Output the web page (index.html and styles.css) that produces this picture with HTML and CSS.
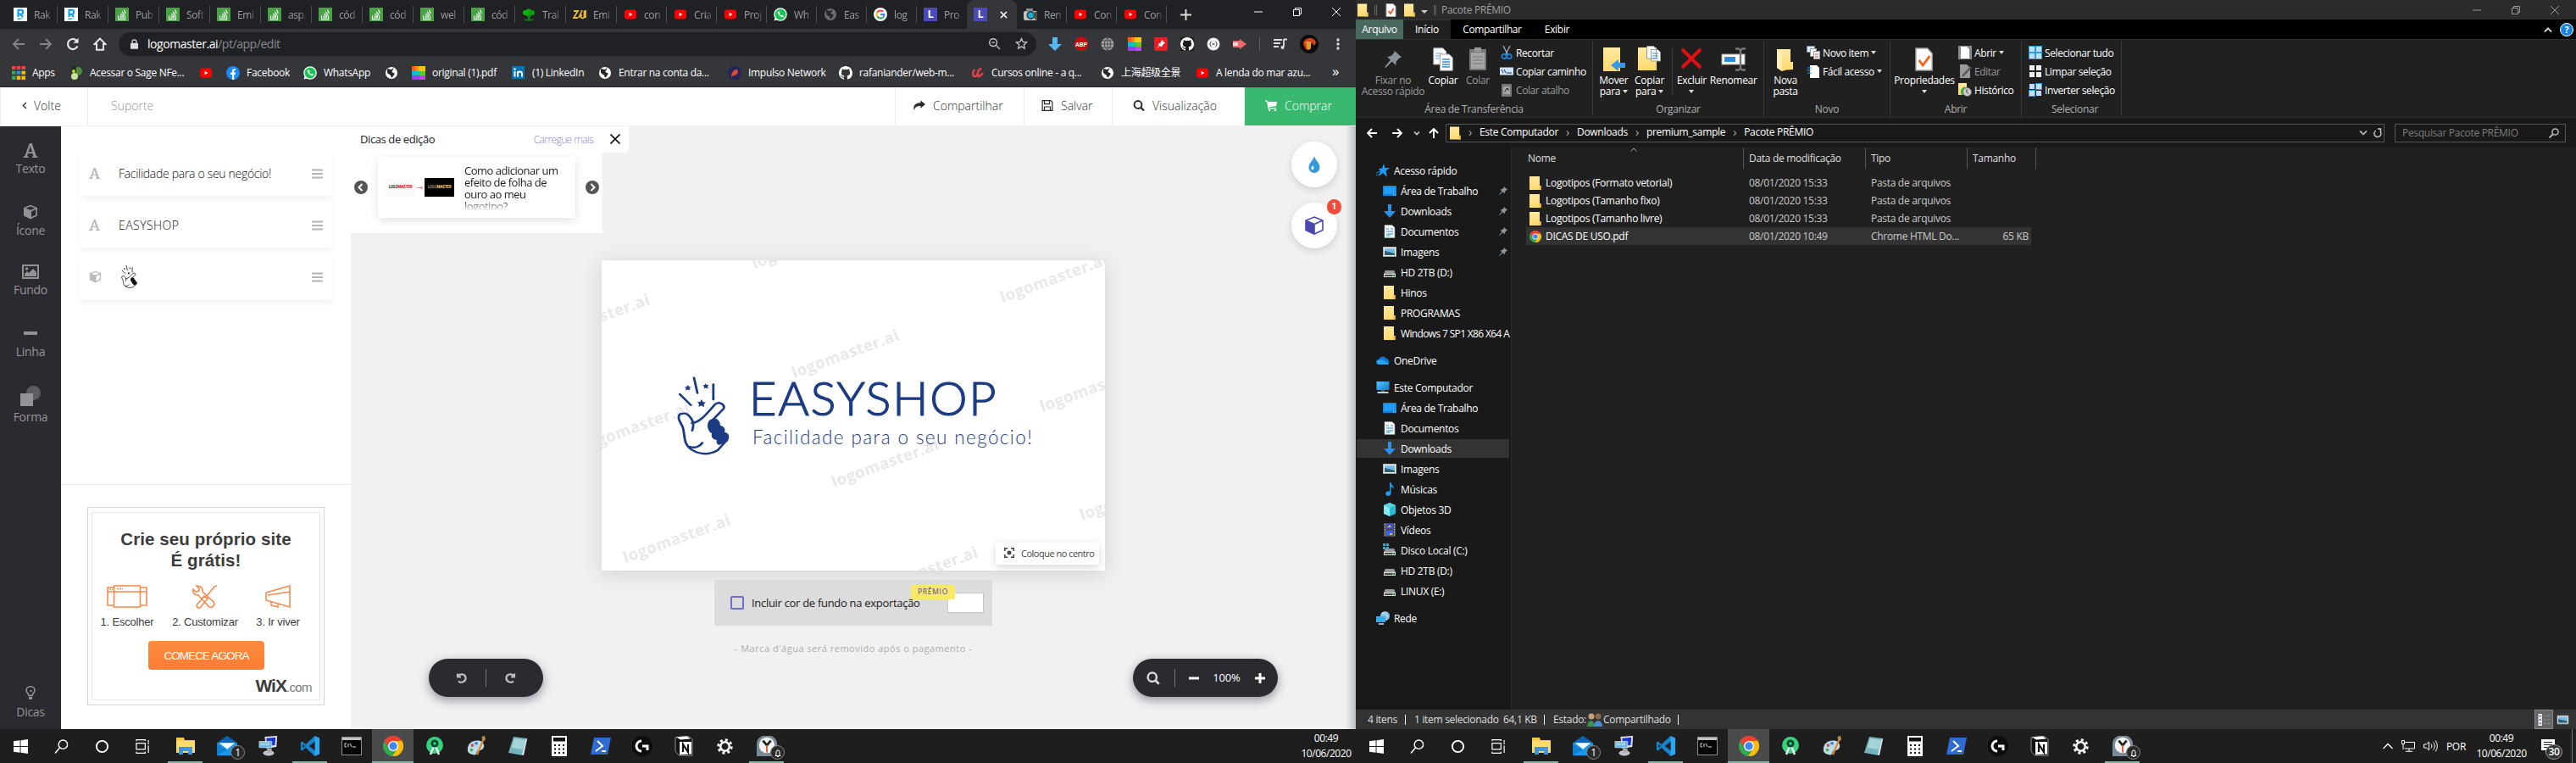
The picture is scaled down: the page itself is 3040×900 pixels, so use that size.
FILE: index.html
```html
<!DOCTYPE html>
<html lang="pt">
<head>
<meta charset="utf-8">
<title>Logomaster</title>
<link rel="stylesheet" href="styles.css">
</head>
<body>
<svg class="defs" width="0" height="0">
  <defs>
    <linearGradient id="gfold" x1="0" y1="0" x2="0" y2="1"><stop offset="0" stop-color="#ffe9a2"/><stop offset="1" stop-color="#ffd96b"/></linearGradient>
    <linearGradient id="gblue" x1="0" y1="0" x2="1" y2="1"><stop offset="0" stop-color="#5cc4ff"/><stop offset="1" stop-color="#0a7bd6"/></linearGradient>
    <symbol id="so" viewBox="0 0 16 16"><rect width="16" height="16" fill="#4ba246"/><path d="M3.500 9.500v4.500h8V9.500M5 12h5M5.300 9.800l4.800.9M6.200 7.300l4.200 2.200M8 4.800l3.200 3.500M10.500 2.500l1.800 4.300" fill="none" stroke="#fff" stroke-width="1.100"/></symbol>
    <symbol id="rk" viewBox="0 0 16 16"><rect width="16" height="16" fill="#fff"/><path d="M5.500 11V2.800h3.200a2.400 2.400 0 0 1 0 4.900H5.500M8 7.700l3 3.300" fill="none" stroke="#0a9bf0" stroke-width="2"/><path d="M4 12.500h8l-6.500 1.800z" fill="#0a9bf0"/></symbol>
    <symbol id="yt" viewBox="0 0 16 16"><rect x="1" y="2.500" width="14" height="11" rx="3" fill="#f00"/><path d="M6.600 5.800v4.400L10.400 8z" fill="#fff"/></symbol>
    <symbol id="tree" viewBox="0 0 16 16"><circle cx="8" cy="6" r="4.500" fill="#0ea80e"/><circle cx="4" cy="6" r="3" fill="#0db40d"/><circle cx="12" cy="6" r="3" fill="#0a9a0a"/><rect x="7" y="8" width="2.500" height="6" fill="#0a8a1a"/><ellipse cx="8" cy="14.500" rx="6" ry="1.200" fill="#0d7a1d"/></symbol>
    <symbol id="zd" viewBox="0 0 16 16"><path d="M1 4h5L1 12h5M7 12L11 3M11 8.500a2 2 0 1 0 2.500 2V3.500M15 3v9" fill="none" stroke="#e9b93c" stroke-width="1.800"/></symbol>
    <symbol id="wa" viewBox="0 0 16 16"><circle cx="8" cy="8" r="7.800" fill="#fff"/><path d="M.5 15.500l1.200-4L5 14.300z" fill="#fff"/><circle cx="8" cy="8" r="6.500" fill="#19c455"/><path d="M5.200 4.500c-1 1-.4 2.800 1.600 4.800s4 2.500 4.800 1.400l.3-1-1.800-1-.9.900c-1-.4-2-1.400-2.400-2.300l.8-.9-.8-1.800z" fill="#fff"/></symbol>
    <symbol id="globe" viewBox="0 0 16 16"><circle cx="8" cy="8" r="7" fill="currentColor"/><path d="M3 3.500c2-.8 3 1 5 .4s1-1.800 2.500-1.500L9 5.500c-1 1-.5 2 1 2.200s2 1 1 2.800l-2.500 3c-1.500 0-.8-2.500-2.200-3.200S4 9 3 7.500z" fill="#27282c"/></symbol>
    <symbol id="gg" viewBox="0 0 16 16"><circle cx="8" cy="8" r="8" fill="#fff"/><g fill="none" stroke-width="2"><path d="M4.300 5.500A4.500 4.500 0 0 1 11.200 4.800" stroke="#ea4335"/><path d="M4.300 5.500a4.500 4.500 0 0 0 0 5" stroke="#fbbc05"/><path d="M4.300 10.500a4.500 4.500 0 0 0 6.700.9" stroke="#34a853"/><path d="M8 8h4.500a4.500 4.500 0 0 1-1.500 3.400" stroke="#4285f4"/></g></symbol>
    <symbol id="cam" viewBox="0 0 16 16"><rect x="0" y="4" width="16" height="11" rx="2" fill="#c9c3b6"/><rect x="3" y="1" width="8" height="4" fill="#888"/><circle cx="8.500" cy="9" r="5" fill="#17495c"/><circle cx="8.500" cy="9" r="3.300" fill="#22a9d0"/><rect x="13" y="5" width="3" height="9" fill="#5a4b34"/></symbol>
    <symbol id="rainbow" viewBox="0 0 16 16"><rect width="4" height="6" fill="#ff5a1f"/><rect x="4" width="4" height="6" fill="#ff8a1a"/><rect x="8" width="8" height="6" fill="#ffc414"/><rect y="6" width="5" height="5" fill="#12b6e8"/><rect x="5" y="6" width="5" height="5" fill="#17c99a"/><rect x="10" y="6" width="6" height="5" fill="#67c722"/><rect y="11" width="16" height="5" fill="#9a3cf4"/><rect x="9" y="11" width="7" height="5" fill="#b94af8"/></symbol>
    <symbol id="gh" viewBox="0 0 16 16"><path fill="currentColor" d="M8 0C3.580 0 0 3.580 0 8c0 3.540 2.290 6.530 5.470 7.590.4.070.55-.17.55-.38 0-.19-.01-.82-.01-1.490-2.010.37-2.530-.49-2.690-.94-.09-.23-.48-.94-.82-1.130-.28-.15-.68-.52-.01-.53.63-.01 1.080.58 1.230.82.72 1.210 1.870.87 2.330.66.07-.52.28-.87.51-1.070-1.780-.2-3.640-.89-3.640-3.950 0-.87.31-1.590.82-2.150-.08-.2-.36-1.020.08-2.120 0 0 .67-.21 2.200.82a7.600 7.600 0 0 1 4 0c1.530-1.040 2.200-.82 2.200-.82.44 1.100.16 1.920.08 2.120.51.56.82 1.270.82 2.150 0 3.070-1.870 3.750-3.650 3.950.29.25.54.73.54 1.480 0 1.070-.01 1.930-.01 2.200 0 .21.15.46.55.38A8 8 0 0 0 16 8c0-4.420-3.580-8-8-8z"/></symbol>
    <symbol id="folder" viewBox="0 0 14 16"><path d="M0 0h12v11h1.500v5H0z" fill="url(#gfold)"/><path d="M12 11h1.500v5H11V12z" fill="#f4c64f"/></symbol>
    <symbol id="down" viewBox="0 0 16 16"><path d="M6 0h4v8h5l-7 8-7-8h5z" fill="#2f8fe6"/></symbol>
    <symbol id="desk" viewBox="0 0 16 16"><rect y="2" width="16" height="12" fill="#0c7fd8"/><rect x="1" y="3" width="14" height="9" fill="#1f9cf8"/><path d="M12 13h1M14 13h1" stroke="#fff"/></symbol>
    <symbol id="doc" viewBox="0 0 16 16"><path d="M2 .5h9l3 3v12H2z" fill="#f4f7f8" stroke="#999" stroke-width=".6"/><path d="M4 5h3M4 8h8M4 11h8M4 13h5M9 5h3" stroke="#2d8fc6" stroke-width="1.200"/></symbol>
    <symbol id="img" viewBox="0 0 16 16"><rect x=".5" y="2.500" width="15" height="11" fill="#f4f4f4" stroke="#aaa"/><rect x="2" y="4" width="12" height="8" fill="#79b8ea"/><path d="M2 7l4 1 8 2v2H2z" fill="#2a5f6b"/></symbol>
    <symbol id="hd" viewBox="0 0 16 16"><path d="M3 6h10l2 4v4H1v-4z" fill="#9b9b9b"/><rect x="1" y="10" width="14" height="4" fill="#dcdcdc"/><rect x="2" y="11" width="12" height="2" fill="#4a4a4a"/><rect x="11" y="11.500" width="2" height="1.200" fill="#2f2"/></symbol>
    <symbol id="hdw" viewBox="0 0 16 16"><use href="#hd"/><path d="M0 0h3v3H0zM4 0h3v3H4zM0 4h3v3H0zM4 4h3v3H4z" fill="#19b5ee"/></symbol>
    <symbol id="pc" viewBox="0 0 16 16"><rect x=".5" y="1" width="15" height="10" fill="url(#gblue)"/><path d="M6 11h4v2H6z" fill="#555"/><path d="M2 13h12l1 2H1z" fill="#b9d6e6"/></symbol>
    <symbol id="note" viewBox="0 0 16 16"><path d="M8 0h1.500c0 3 4 4 3 8-.6-2-2-2.600-3-2.800V13a3.200 2.800 0 1 1-1.500-2.200z" fill="#1b9af2"/></symbol>
    <symbol id="cube3" viewBox="0 0 16 16"><path d="M1 3l7-3 7 3v10l-7 3-7-3z" fill="#25bcd0"/><path d="M1 3l7 3v10l-7-3z" fill="#8ae9ee"/><path d="M1 3l7-3 7 3-7 3z" fill="#5ad4e0"/></symbol>
    <symbol id="vid" viewBox="0 0 16 16"><rect x="1" width="14" height="16" fill="#4c4c4c"/><rect x="4" y="1" width="8" height="6" fill="#3655c9"/><rect x="4" y="9" width="8" height="6" fill="#3368d6"/><path d="M5 5l3-3 2 3zM8 12h3v2H8z" fill="#f0b429"/><path d="M2.500 1v15M13.500 1v15" stroke="#ccc" stroke-dasharray="1.500 1.500"/></symbol>
    <symbol id="cloud" viewBox="0 0 16 16"><path d="M3 13a3 3 0 0 1 0-6 5 5 0 0 1 9-1 4 4 0 0 1 2 7z" fill="#1074d0"/><path d="M3 13a3 3 0 0 1-1-5l5-1 8 5-1 1z" fill="#2ba4ec"/></symbol>
    <symbol id="net" viewBox="0 0 16 16"><circle cx="10.500" cy="5.500" r="5.500" fill="#8cc4e4"/><path d="M7 2c3 1 5 1 7 5" stroke="#e1f0f7" fill="none"/><rect y="6" width="11" height="7" fill="#3da9ec"/><rect x="3" y="14" width="6" height="2" fill="#9fb9c6"/></symbol>
    <symbol id="star" viewBox="0 0 16 16"><path d="M9 0l1.500 5H16l-4.500 3.500L13 16 8 11l-5 4 2-6L3 6l4-.5z" fill="#1b9af2"/><path d="M0 11l5-2M0 14l4-2" stroke="#1b7fc2"/></symbol>
    <symbol id="pin" viewBox="0 0 16 16"><path d="M9.500 0L16 6l-2 .8-3 3-.5 3.700L7 10l-6 6-.8-.8L5.500 8.600 2.500 5.500l3.700-.7 2.800-3z" fill="#8b9298"/></symbol>
    <symbol id="chrome" viewBox="0 0 24 24"><circle cx="12" cy="12" r="12" fill="#34a853"/><path d="M12 12L1.600 6A12 12 0 0 1 22.400 6z" fill="#ea4335"/><path d="M22.400 6A12 12 0 0 1 11 24l6-9-5-9z" fill="#fbbc05"/><path d="M1.600 6A12 12 0 0 1 22.400 6H12L7 14z" fill="#ea4335"/><circle cx="12" cy="12" r="6" fill="#fff"/><circle cx="12" cy="12" r="4.700" fill="#4285f4"/></symbol>
    <symbol id="box" viewBox="0 0 18 18"><path d="M9 .8L17 4v9.500L9 17.500l-8-4V4z" fill="currentColor"/><path d="M9 2.400L14.500 4.500 9 6.700 3.500 4.500zM10 8.500l5.300-2.400v6.300L10 15z" fill="var(--hole)"/></symbol>
    <symbol id="hand" viewBox="265 460 152 280" preserveAspectRatio="none"><g fill="none" stroke="currentColor" stroke-width="7" stroke-linecap="round"><path d="M314 465l10 54M273 523l32 39M370 488v54"/><path d="M309 652c6-22 2-38-8-50-10-16-20-10-28-8-8 14 0 26 8 44 8 30 0 60 26 82 24 18 50 20 76 2l26-36M308 626c26-4 44-36 68-68 12-10 28 2 24 16l-30 38M302 710c16 6 30-2 36-14"/></g><path d="M356 620c12-20 34-12 34 14 12 4 16 14 12 24 16 2 16 22 8 34l-24 12c-10-8-6-16-6-18-12-2-18-12-14-24-12-4-16-28-10-42zM296 490l4 7 5 1-4 5 2 7-7-3-6 3 1-7-4-5 6-1zM347 484l3 6 7-1-4 7 3 7-7-2-6 3 1-7-4-6 6-1zM336 541l4 10 8 1-6 7 2 10-8-5-9 4 2-9-5-8 8-1z" fill="currentColor"/></symbol>
    <symbol id="win" viewBox="0 0 18 18"><path d="M0 2.500l8-1.100v7.200H0zM9 1.200L18 0v8.600H9zM0 9.500h8v7.200l-8-1.100zM9 9.500h9V18l-9-1.200z" fill="#fff"/></symbol>
    <symbol id="mag" viewBox="0 0 18 18"><circle cx="11" cy="6.500" r="5.500" fill="none" stroke="#fff" stroke-width="1.500"/><path d="M7 10.500l-6 7" stroke="#fff" stroke-width="1.500"/></symbol>
    <symbol id="cort" viewBox="0 0 18 18"><circle cx="9" cy="9" r="7" fill="none" stroke="#fff" stroke-width="2"/></symbol>
    <symbol id="tv" viewBox="0 0 18 18"><path d="M1 2V.7h11V2M1 5h11v7.500H1zM1 15.500v1.800h11v-1.800M16 1v3M16 8v9M15 5.500h2" fill="none" stroke="#fff" stroke-width="1.300"/></symbol>
    <symbol id="expl" viewBox="0 0 24 24"><path d="M1 2h9l1 3h12v15H1z" fill="#fbc640"/><rect x="1" y="6" width="22" height="14" fill="#ffdb73"/><path d="M4 13h16v9h-5v-4H9v4H4z" fill="#3a97dc"/></symbol>
    <symbol id="mail" viewBox="0 0 26 26"><path d="M0 9L13 0l13 9z" fill="#0b64b3"/><path d="M0 9h26v16H0z" fill="#1c9aea"/><path d="M3 9h20l-10 8z" fill="#f4f9fd"/><path d="M0 25V10l13 8z" fill="#0e7fd0"/></symbol>
    <symbol id="osk" viewBox="0 0 26 26"><path d="M8 1l16-1-1 14-13 2z" fill="#e6e6ea"/><path d="M10 3l12-1-1 10-10 1z" fill="#1836d8"/><path d="M1 7h16v8H1z" fill="#60b7f4" stroke="#fff" stroke-width=".6"/><path d="M3 9h12M3 11.500h12" stroke="#fff" stroke-dasharray="2 1"/><ellipse cx="13" cy="22" rx="7" ry="3.500" fill="#c3c3c9"/><path d="M11 16h6v5h-6z" fill="#aaa"/></symbol>
    <symbol id="vsc" viewBox="0 0 26 26"><path d="M19 0l6 3v20l-6 3L7 15l-4 4-2-1.500V8.500L3 7l4 4z" fill="#1783ca"/><path d="M19 0l6 3v20l-6 3z" fill="#2ba6ef"/><path d="M19 7.500v11L11.500 13zM3.500 10.500v5L6 13z" fill="#1e1e1e"/></symbol>
    <symbol id="cmd" viewBox="0 0 24 24"><rect x=".5" y="1.500" width="23" height="21" fill="#050505" stroke="#8c8c8c"/><rect x="1" y="2" width="22" height="3" fill="#c4c4c4"/><path d="M6 9H4v4h2M8 9v4M10 9l2 4M13 13h4" stroke="#ddd" fill="none"/></symbol>
    <symbol id="and" viewBox="0 0 24 24"><circle cx="12" cy="11" r="10" fill="#37d27c"/><path d="M7 22l4-10h2l4 10" fill="none" stroke="#e7f3ee" stroke-width="2.500"/><circle cx="12" cy="9" r="4.500" fill="#0a4432"/><circle cx="12" cy="9" r="1.800" fill="#37d27c"/></symbol>
    <symbol id="paint" viewBox="0 0 26 26"><path d="M2 17c0-8 7-12 14-11s9 8 5 11-5 0-7 3 0 5-5 4-7-3-7-7z" fill="#bcdcec"/><circle cx="8" cy="12" r="2" fill="#e04545"/><circle cx="13" cy="9.500" r="2" fill="#3a78d8"/><circle cx="7" cy="18" r="2" fill="#4bae4b"/><path d="M22 5L14 24" stroke="#e08a2b" stroke-width="2.500"/><path d="M20 1l4-1 1 5-4 2z" fill="#b98650"/></symbol>
    <symbol id="np" viewBox="0 0 24 24"><path d="M7 1l16 2-5 20L1 20z" fill="#74b5bf"/><path d="M8 3l13 2-3 11-13-2z" fill="#a4d4da"/><path d="M22 3l1 1-4 19-2-1z" fill="#e6eef0"/></symbol>
    <symbol id="calc" viewBox="0 0 18 24"><rect width="18" height="24" fill="#fff"/><rect x="2" y="2" width="14" height="4.500" fill="#111"/><path d="M3 11h13M3 15.500h13M3 20h13" stroke="#111" stroke-width="2" stroke-dasharray="2 3"/></symbol>
    <symbol id="ps" viewBox="0 0 24 20"><path d="M4 0h20l-4 20H0z" fill="#2f6bd0"/><path d="M8 4l6 6-8 6M13 16h5" fill="none" stroke="#fff" stroke-width="2"/></symbol>
    <symbol id="gicon" viewBox="0 0 24 24"><circle cx="12" cy="12" r="12" fill="#0d0d0d"/><path d="M11 6a6 6 0 0 0 0 12M12 12h6v5" fill="none" stroke="#fff" stroke-width="3"/></symbol>
    <symbol id="notion" viewBox="0 0 22 24"><path d="M1 2l15-2 5 4v19L6 24l-5-6z" fill="#111" stroke="#aaa" stroke-width=".8"/><path d="M2 1.500l13-1 4 3-12 1z" fill="#fff"/><path d="M6 7h14v14.500L6 22.500z" fill="#fff"/><path d="M10 19v-9l6 9v-9" fill="none" stroke="#111" stroke-width="2.200"/></symbol>
    <symbol id="gear" viewBox="0 0 20 20"><circle cx="10" cy="10" r="5.500" fill="none" stroke="#fff" stroke-width="2.600"/><circle cx="10" cy="10" r="8.200" fill="none" stroke="#fff" stroke-width="3" stroke-dasharray="3.200 3.240"/></symbol>
    <symbol id="clk" viewBox="0 0 26 26"><path d="M0 26V10a13 11 0 0 1 26 0v16z" fill="#7c8a98"/><circle cx="13" cy="12" r="10" fill="#f1f3f4"/><path d="M8 6l5 6 5-6" fill="none" stroke="#222" stroke-width="3"/><path d="M13 12v9" stroke="#e05a2b" stroke-width="2"/></symbol>
    <symbol id="menu3" viewBox="0 0 13 12"><path d="M0 1.500h13M0 6h13M0 10.500h13" stroke="#b4b4b4" stroke-width="2"/></symbol>
    <symbol id="dicon" viewBox="0 0 24 28"><path d="M1 1h15l6 6v20H1z" fill="#fff" stroke="#9a9a9a" stroke-width="1.500"/></symbol>
    <symbol id="sq4" viewBox="0 0 16 16"><path d="M1 1h6v6H1zM9 1h6v6H9zM1 9h6v6H1zM9 9h6v6H9z" fill="currentColor"/></symbol>
    <symbol id="serifA" viewBox="0 0 16 16"><path fill="currentColor" fill-rule="evenodd" d="M0 16v-1.200l1.600-.5L7 0h2.500l5 14.300 1.500.5V16h-6.300v-1.200l1.600-.4-1-3.200H5.200l-1 3.200 1.700.4V16zM5.700 9.600h4.100L7.800 3.400z"/></symbol>
  </defs>
</svg>

<div class="desktop">
<section class="chrome">
  <div class="tabs">
    <div class="tab"><svg><use href="#rk"/></svg><span>Rak</span></div>
    <div class="tab"><svg><use href="#rk"/></svg><span>Rak</span></div>
    <div class="tab"><svg><use href="#so"/></svg><span>Pub</span></div>
    <div class="tab"><svg><use href="#so"/></svg><span>Soft</span></div>
    <div class="tab"><svg><use href="#so"/></svg><span>Emi</span></div>
    <div class="tab"><svg><use href="#so"/></svg><span>asp.</span></div>
    <div class="tab"><svg><use href="#so"/></svg><span>cód</span></div>
    <div class="tab"><svg><use href="#so"/></svg><span>cód</span></div>
    <div class="tab"><svg><use href="#so"/></svg><span>wel</span></div>
    <div class="tab"><svg><use href="#so"/></svg><span>cód</span></div>
    <div class="tab"><svg><use href="#tree"/></svg><span>Tral</span></div>
    <div class="tab"><svg><use href="#zd"/></svg><span>Emi</span></div>
    <div class="tab n"><svg><use href="#yt"/></svg><span>con</span></div>
    <div class="tab n"><svg><use href="#yt"/></svg><span>Cria</span></div>
    <div class="tab n"><svg><use href="#yt"/></svg><span>Proj</span></div>
    <div class="tab n"><svg><use href="#wa"/></svg><span>Wh</span></div>
    <div class="tab n dim"><svg><use href="#globe"/></svg><span>Eas</span></div>
    <div class="tab n"><svg><use href="#gg"/></svg><span>log</span></div>
    <div class="tab n nb"><b class="lfav">L</b><span>Pro</span></div>
    <div class="tab n on"><b class="lfav">L</b><svg class="tx" viewBox="0 0 10 10"><path d="M1 1l8 8M9 1L1 9" stroke="#eee" stroke-width="1.800"/></svg></div>
    <div class="tab n"><svg><use href="#cam"/></svg><span>Ren</span></div>
    <div class="tab n"><svg><use href="#yt"/></svg><span>Con</span></div>
    <div class="tab n"><svg><use href="#yt"/></svg><span>Con</span></div>
    <svg class="plus" viewBox="0 0 12 12"><path d="M6 0v12M0 6h12" stroke="#ddd" stroke-width="1.800"/></svg>
    <div class="wbtns"><svg viewBox="0 0 10 10"><path d="M0 5h10" stroke="#fff"/></svg><svg viewBox="0 0 10 10"><path d="M.5 2.500h7v7h-7zM2.500 2.500v-2h7v7h-2" fill="none" stroke="#fff"/></svg><svg viewBox="0 0 10 10"><path d="M0 0l10 10M10 0L0 10" stroke="#fff"/></svg></div>
  </div>
  <div class="toolbar">
    <div class="nav">
      <svg viewBox="0 0 16 16"><path d="M15 8H2M8 2L2 8l6 6" fill="none" stroke="#85868a" stroke-width="1.800"/></svg>
      <svg viewBox="0 0 16 16"><path d="M1 8h13M8 2l6 6-6 6" fill="none" stroke="#85868a" stroke-width="1.800"/></svg>
      <svg viewBox="0 0 16 16"><path d="M13.500 10.500A6 6 0 1 1 12.500 4" fill="none" stroke="#e8eaed" stroke-width="2.200"/><path d="M14.500.8v6H8.500z" fill="#e8eaed"/></svg>
      <svg viewBox="0 0 16 16"><path d="M8 1.500L1.500 8H4v6.800h8V8h2.500z" fill="none" stroke="#e8eaed" stroke-width="1.900"/></svg>
    </div>
    <div class="omni">
      <svg class="lock" viewBox="0 0 10 13"><rect y="5" width="10" height="8" rx="1" fill="#dadce0"/><path d="M2.300 5V3.500a2.700 2.700 0 0 1 5.400 0V5" fill="none" stroke="#dadce0" stroke-width="1.500"/></svg>
      <span class="url"><em>logomaster.ai</em>/pt/app/edit</span>
      <svg class="oz" viewBox="0 0 16 16"><circle cx="6.500" cy="6.500" r="4.700" fill="none" stroke="#c4c7cb" stroke-width="1.500"/><path d="M10 10l5 5M4.500 6.500h4" stroke="#c4c7cb" stroke-width="1.500"/></svg>
      <svg class="os" viewBox="0 0 16 16"><path d="M8 1.500l1.900 4.300 4.600.4L11 9.400l1 4.700L8 11.600 4 14.100l1-4.700L1.500 6.200l4.600-.4z" fill="none" stroke="#c4c7cb" stroke-width="1.400"/></svg>
    </div>
    <div class="exts">
      <svg viewBox="0 0 16 16"><path d="M5 0h6v8h5l-8 8-8-8h5z" fill="#55b9f3"/></svg>
      <svg viewBox="0 0 16 16"><path d="M5 0h6l5 5v6l-5 5H5l-5-5V5z" fill="#c70d0d"/><text x="8" y="11" font-size="7" font-weight="bold" fill="#fff" text-anchor="middle" font-family="Roboto, sans-serif" textLength="14">ABP</text></svg>
      <svg viewBox="0 0 16 16"><circle cx="8" cy="8" r="7.500" fill="#a9a9a9"/><path d="M0 8h16M8 0v16M1.500 4h13M1.500 12h13M8 .5c-5 4-5 11 0 15M8 .5c5 4 5 11 0 15" fill="none" stroke="#4a4b4e"/></svg>
      <svg><use href="#rainbow"/></svg>
      <svg viewBox="0 0 16 16"><rect width="16" height="16" rx="2" fill="#e51e25"/><path d="M9 3l4 4-1.500.5L9.500 10 9 11.500 7 10 3 13.500 6 9 4.500 7.500 7 7l1.500-2z" fill="#fff"/></svg>
      <svg class="ghx"><use href="#gh"/></svg>
      <svg viewBox="0 0 16 16"><circle cx="8" cy="8" r="7.500" fill="#f1f1f1"/><path d="M5.500 5C4 5.500 5 7.500 3.500 8 5 8.500 4 10.500 5.500 11M10.500 5c1.500.5.500 2.500 2 3-1.500.5-.5 2.500-2 3M6.500 8h3" fill="none" stroke="#222"/></svg>
      <svg viewBox="0 0 16 16"><path d="M0 4h8V2l8 6-8 6v-2H0z" fill="#f0686a"/><rect x="0" y="6" width="6" height="4" fill="#fbd0cf"/></svg>
      <i></i>
      <svg viewBox="0 0 16 16"><path d="M0 3h10M0 7h8M0 11h6M12 2v9M12 2.500h4" stroke="#dadce0" stroke-width="1.800"/><circle cx="10.500" cy="12" r="2" fill="#dadce0"/></svg>
      <svg class="av" viewBox="0 0 22 22"><circle cx="11" cy="11" r="11" fill="#0c0c0c"/><path d="M4 11C4 3 17 1 19 9l-2 4-3-4-2 9-5-1z" fill="#d8401c"/><path d="M7 8h6v8l-4 2z" fill="#e0a02d"/></svg>
      <svg viewBox="0 0 16 16"><g fill="#dadce0"><circle cx="8" cy="3" r="1.700"/><circle cx="8" cy="8" r="1.700"/><circle cx="8" cy="13" r="1.700"/></g></svg>
    </div>
  </div>
  <div class="marks">
    <a><svg viewBox="0 0 14 14"><path d="M0 0h4v3.500H0zM5 0h4v3.500H5zM10 0h4v3.500h-4z" fill="#e8453c"/><path d="M0 5h4v3.500H0z" fill="#34a853"/><path d="M5 5h4v3.500H5z" fill="#4285f4"/><path d="M10 5h4v3.500h-4z" fill="#fbbc05"/><path d="M0 10h4v4H0z" fill="#34a853"/><path d="M5 10h4v4H5zM10 10h4v4h-4z" fill="#fbbc05"/></svg>Apps</a>
    <a><svg viewBox="0 0 16 16"><circle cx="10" cy="6" r="5" fill="#51883b"/><path d="M3 0h5v7l-3 3-3-4z" fill="#1c3416"/><ellipse cx="6" cy="12" rx="4" ry="4" fill="#c5e59a"/><circle cx="5" cy="6" r="2" fill="#c6d52f"/></svg>Acessar o Sage NFe...</a>
    <a><svg><use href="#yt"/></svg></a>
    <a><svg viewBox="0 0 16 16"><circle cx="8" cy="8" r="8" fill="#1b8af2"/><path d="M7 16v-6H5V7.500h2V6c0-2.200 1.300-3.300 4-2.900v2C9.700 5 9.300 5.300 9.300 6.200v1.300H11L10.600 10H9.300v6z" fill="#fff"/></svg>Facebook</a>
    <a><svg><use href="#wa"/></svg>WhatsApp</a>
    <a><svg><use href="#globe"/></svg></a>
    <a><svg><use href="#rainbow"/></svg>original (1).pdf</a>
    <a><svg viewBox="0 0 16 16"><rect width="15" height="15" fill="#0a73b5"/><path d="M3.500 6v6.500M7 6v6.500M7 9c0-3 5-3.500 5 0v3.500" stroke="#fff" stroke-width="2" fill="none"/><circle cx="3.500" cy="3.500" r="1.300" fill="#fff"/></svg>(1) LinkedIn</a>
    <a><svg><use href="#globe"/></svg>Entrar na conta da...</a>
    <a><svg viewBox="0 0 16 16"><circle cx="8" cy="8" r="8" fill="#24265c"/><path d="M4 13c0-4 2-9 7-9 2 3 0 6-3 7-2 0-3 1-4 2z" fill="#e14a2c"/></svg>Impulso Network</a>
    <a><svg><use href="#gh"/></svg>rafaniander/web-m...</a>
    <a><svg viewBox="0 0 16 16"><path d="M4 4c-3 4-2 9 1 8s3-4 4-8c-2 5-1 9 1 8s3-3 4-4M11 2v3" fill="none" stroke="#e5414b" stroke-width="2.400"/></svg>Cursos online - a q...</a>
    <a><svg><use href="#globe"/></svg>上海超级全景</a>
    <a><svg><use href="#yt"/></svg>A lenda do mar azu...</a>
    <a class="more">»</a>
  </div>
  <header class="apphead">
    <div class="back"><svg viewBox="0 0 6 8"><path d="M5 .5L1.200 4 5 7.500" fill="none" stroke="#333" stroke-width="1.300"/></svg>Volte</div>
    <div class="sup">Suporte</div>
    <div class="hb h1"><svg viewBox="0 0 15 13"><path d="M9 0l6 5-6 5V7C4 7 1.500 8.500 1 13-1 7 2 3 9 3z" fill="#2b2a30"/></svg>Compartilhar</div>
    <div class="hb h2"><svg viewBox="0 0 13 13"><path d="M.6.600h9.800l2 2v9.800H.6zM3 .6v4h6v-4M3 12V8h7v4" fill="none" stroke="#2b2a30" stroke-width="1.200"/></svg>Salvar</div>
    <div class="hb h3"><svg viewBox="0 0 13 13"><circle cx="5.500" cy="5.500" r="4.400" fill="none" stroke="#2b2a30" stroke-width="2"/><path d="M8.500 8.500l4 4" stroke="#2b2a30" stroke-width="2.300"/></svg>Visualização</div>
    <div class="hb h4"><svg viewBox="0 0 14 13"><path d="M0 .5h2.800l.5 1.500H14l-1 5.300-8.400 1 .3 1H13v1.200H3.600L2 1.700H0z" fill="#fff"/><circle cx="5" cy="12" r="1.200" fill="#fff"/><circle cx="12" cy="12" r="1.200" fill="#fff"/></svg>Comprar</div>
  </header>
  <main class="app">
    <nav class="side">
      <div><svg width="18" height="17"><use href="#serifA"/></svg>Texto</div>
      <div><svg width="18" height="18"><use href="#box"/></svg>Ícone</div>
      <div><svg width="20" height="17" viewBox="0 0 20 17"><path d="M1 1h18v15H1z" fill="none" stroke="currentColor" stroke-width="2"/><circle cx="5.500" cy="5" r="1.800" fill="currentColor"/><path d="M3 14v-3l3-3 2 2 5-5 4 4v5z" fill="currentColor"/></svg>Fundo</div>
      <div><svg width="16" height="18" viewBox="0 0 16 18"><rect y="7" width="16" height="4" rx="1" fill="currentColor"/></svg>Linha</div>
      <div class="fm"><svg width="24" height="24" viewBox="0 0 24 24"><circle cx="15.500" cy="8.500" r="8.500" fill="#5d5d61"/><rect y="9" width="15" height="15" fill="currentColor"/></svg>Forma</div>
      <div class="dc"><svg width="12" height="17" viewBox="0 0 12 17"><path d="M4 11.500C4 9 1 8.500 1 5.500a5 4.700 0 0 1 10 0C11 8.500 8 9 8 11.500z" fill="none" stroke="currentColor" stroke-width="1.600"/><path d="M4 13h4v3H4zM5.500 5h2v2h-2z" fill="currentColor"/></svg>Dicas</div>
    </nav>
    <section class="panel">
      <div class="layers">
        <div class="layer"><svg class="li"><use href="#serifA"/></svg><span>Facilidade para o seu negócio!</span><svg class="mn"><use href="#menu3"/></svg></div>
        <div class="layer caps"><svg class="li"><use href="#serifA"/></svg><span>EASYSHOP</span><svg class="mn"><use href="#menu3"/></svg></div>
        <div class="layer"><svg class="li cube"><use href="#box"/></svg><span><svg class="hs"><use href="#hand"/></svg></span><svg class="mn"><use href="#menu3"/></svg></div>
      </div>
      <div class="adwrap"><div class="ad"><div class="adin">
        <h3>Crie seu próprio site<br>É grátis!</h3>
        <div class="steps">
          <div class="s1"><svg width="48" height="27" viewBox="0 0 48 27"><path d="M8.500 1h31v25h-31zM1 3h7.500v21H1zM39.500 3H47v21h-7.500zM8.500 8h31M1 8h7M40 8h7" /><path d="M12 4.500h7M3 5.500h4" stroke-dasharray="2 1"/></svg>1. Escolher</div>
          <div class="s2"><svg width="30" height="28" viewBox="0 0 30 28"><path d="M5 1l3 3v3l-4 1-3-3c-1 4 1 7 6 7l13 14 3 .500 3-3-.5-3L12 8c1-4-2-7-7-7zM29 1l-3 1-9 11M14 13l4 3L9 27H6l-1-3z"/></svg>2. Customizar</div>
          <div class="s3"><svg width="30" height="27" viewBox="0 0 30 27"><path d="M1 9l28-8v25L1 18zM7 20v4l8 2v-4M3 12l26-4"/></svg>3. Ir viver</div>
        </div>
        <div class="cta">COMECE AGORA</div>
        <div class="wix"><b>WiX</b><span>.com</span></div>
      </div></div></div>
    </section>
    <section class="canvas">
      <aside class="tips">
        <div class="th"><span>Dicas de edição</span><a>Carregue mais</a><svg viewBox="0 0 12 12"><path d="M.5.500l11 11M11.500.5l-11 11" stroke="#111" stroke-width="1.600"/></svg></div>
        <div class="tb">
          <svg class="ar" viewBox="0 0 16 16"><circle cx="8" cy="8" r="8" fill="#545456"/><path d="M9.500 4L5.500 8l4 4" fill="none" stroke="#fff" stroke-width="2"/></svg>
          <div class="tc"><div class="thumb">LOGO<b>MASTER</b></div><i>→</i><div class="thumb k">LOGO<b>MASTER</b></div><p>Como adicionar um efeito de folha de ouro ao meu logotipo?</p></div>
          <svg class="ar" viewBox="0 0 16 16"><circle cx="8" cy="8" r="8" fill="#545456"/><path d="M6.500 4l4 4-4 4" fill="none" stroke="#fff" stroke-width="2"/></svg>
        </div>
      </aside>
      <div class="board">
        <span class="wm w1">logomaster.ai</span><span class="wm w2">logomaster.ai</span><span class="wm w3">logomaster.ai</span><span class="wm w4">logomaster.ai</span><span class="wm w5">logomaster.ai</span><span class="wm w6">logomaster.ai</span><span class="wm w7">logomaster.ai</span><span class="wm w8">logomaster.ai</span><span class="wm w9">logomaster.ai</span><span class="wm w10">logomaster.ai</span>
        <div class="logo"><svg class="hl"><use href="#hand"/></svg><div><div class="brand">EASYSHOP</div><div class="tag">Facilidade para o seu negócio!</div></div></div>
        <div class="center"><svg viewBox="0 0 12 12"><path d="M.8 4V.8H4M8 .8h3.200V4M11.200 8v3.200H8M4 11.200H.8V8" fill="none" stroke="#444" stroke-width="1.500"/><circle cx="6" cy="6" r="2.500" fill="#444"/></svg>Coloque no centro</div>
      </div>
      <div class="bgbar"><i class="cb"></i><span>Incluir cor de fundo na exportação</span><i class="sw"></i><b>PRÊMIO</b></div>
      <div class="mk">- Marca d'água será removido após o pagamento -</div>
      <div class="pill p1"><svg width="13" height="13" viewBox="0 0 13 13"><path d="M2 1.500v4h4M2.500 5C5 .5 12 2 11.500 7.500c-.5 4-6 5.500-8.500 3" fill="none" stroke="#bdbdc0" stroke-width="2.200"/></svg><i></i><svg width="13" height="13" viewBox="0 0 13 13"><path d="M11 1.500v4H7M10.500 5C8 .5 1 2 1.500 7.500c.5 4 6 5.500 8.500 3" fill="none" stroke="#bdbdc0" stroke-width="2.200"/></svg></div>
      <div class="pill p2"><svg width="16" height="16" viewBox="0 0 13 13"><circle cx="5.500" cy="5.500" r="4.200" fill="none" stroke="#d8d8da" stroke-width="2"/><path d="M8.500 8.500l3.500 3.500" stroke="#d8d8da" stroke-width="2.300"/></svg><i></i><svg width="12" height="12" viewBox="0 0 12 12"><path d="M0 6h12" stroke="#fff" stroke-width="3"/></svg><span>100%</span><svg width="12" height="12" viewBox="0 0 12 12"><path d="M0 6h12M6 0v12" stroke="#fff" stroke-width="3"/></svg></div>
      <div class="fab f1"><svg width="14" height="20" viewBox="0 0 14 20"><path d="M7 0c1 5 6.500 8 6.500 13.500a6.500 6.500 0 0 1-13 0C.5 8 6 5 7 0z" fill="#3598db"/><path d="M5 11c1 1.500 1.500 2 1.500 3.500a1.500 1.500 0 0 1-3 0C3.500 13 4.500 12.500 5 11z" fill="#fff"/></svg></div>
      <div class="fab f2"><svg width="22" height="22" viewBox="0 0 22 22"><path d="M1 5.500l10 4V21L1 16.500z" fill="currentColor"/><path d="M11 1L21 5v11.500L11 21 1 16.500V5zM1 5l10 4.500L21 5M11 9.500V21" fill="none" stroke="currentColor" stroke-width="1.600"/></svg><b>1</b></div>
      <div class="edge"></div>
    </section>
  </main>
</section>

<section class="explorer">
  <div class="etitle"><svg><use href="#folder"/></svg><i></i><svg viewBox="0 0 12 16"><path d="M.5.500h8l3 3v12H.5z" fill="#fff" stroke="#aaa"/><path d="M3 9l2.500 3L9 6" stroke="#e05a2b" stroke-width="1.800" fill="none"/></svg><svg><use href="#folder"/></svg><em></em><i></i><span>Pacote PRÊMIO</span>
    <div class="wbtns"><svg viewBox="0 0 10 10"><path d="M0 5h10" stroke="#999"/></svg><svg viewBox="0 0 10 10"><path d="M.5 2.500h7v7h-7zM2.500 2.500v-2h7v7h-2" fill="none" stroke="#999"/></svg><svg viewBox="0 0 10 10"><path d="M0 0l10 10M10 0L0 10" stroke="#999"/></svg></div></div>
  <div class="etabs"><span class="a">Arquivo</span><span class="b">Início</span><span class="c">Compartilhar</span><span class="d">Exibir</span><svg viewBox="0 0 10 8"><path d="M1 6.500l4-4 4 4" fill="none" stroke="#ccc" stroke-width="2"/></svg><b>?</b></div>
  <div class="ribbon">
    <div class="grp g1"><div class="gc">
      <div class="big gray"><svg width="20" height="20"><use href="#pin"/></svg><p>Fixar no<br>Acesso rápido</p></div>
      <div class="big"><svg width="24" height="28" viewBox="0 0 24 28"><path d="M.8.800h11l4 4V20h-15z" fill="#fff" stroke="#aaa"/><path d="M3 7h8M3 10h8M3 13h8" stroke="#5aa5e6"/><path d="M8.500 8h10.700l4 4v15.200H8.500z" fill="#fff" stroke="#aaa"/><path d="M11 14h9M11 17h9M11 20h9M11 23h9" stroke="#3d8fe0" stroke-width="1.400"/></svg><p>Copiar</p></div>
      <div class="big gray"><svg width="20" height="28" viewBox="0 0 20 28"><rect y="2" width="20" height="25" rx="1" fill="#777"/><rect x="6" width="8" height="5" fill="#999"/><rect x="2" y="6" width="16" height="19" fill="#a6a6a6"/><path d="M4 11h12M4 15h12M4 19h12" stroke="#777"/></svg><p>Colar</p></div>
      <ul><li><svg viewBox="0 0 16 16"><path d="M4 0l5 10M12 0L7 10" stroke="#9ab" stroke-width="1.400"/><circle cx="5" cy="12.500" r="2.700" fill="none" stroke="#1e7fd0" stroke-width="1.800"/><circle cx="11" cy="12.500" r="2.700" fill="none" stroke="#1e7fd0" stroke-width="1.800"/></svg>Recortar</li><li><svg viewBox="0 0 16 16"><rect y="3.500" width="16" height="9" fill="#cfe6fa"/><path d="M2 6l2 4M5 6l2 4M8 10h6" stroke="#235"/></svg>Copiar caminho</li><li class="gray"><svg viewBox="0 0 16 16"><rect x="2" y="1" width="12" height="15" rx="1" fill="#777"/><rect x="4" y="4" width="8" height="9" fill="#a6a6a6"/><path d="M6 11c0-3 1-4 4-4M7.500 6.500H10V9" stroke="#333" fill="none"/></svg>Colar atalho</li></ul>
    </div><h6>Área de Transferência</h6></div>
    <div class="grp g2"><div class="gc">
      <div class="big"><svg width="28" height="28" viewBox="0 0 28 28"><path d="M2 0h20v28H2z" fill="url(#gfold)"/><path d="M28 18v6h-8v4l-9-7 9-7v4z" fill="#3a97e6"/></svg><p>Mover<br>para <s></s></p></div>
      <div class="big"><svg width="28" height="30" viewBox="0 0 28 30"><path d="M0 2h22v27H0z" fill="url(#gfold)"/><path d="M10.500.500h8l3 3V15h-11zM15.500 4.500h8l3 3V18h-11z" fill="#fff" stroke="#999"/><path d="M17 9h7M17 12h7M17 15h7" stroke="#3d8fe0"/></svg><p>Copiar<br>para <s></s></p></div>
      <div class="vs"></div>
      <div class="big"><svg width="26" height="26" viewBox="0 0 26 26"><path d="M2 2l22 22M24 2L2 24" stroke="#e01010" stroke-width="4"/></svg><p>Excluir<br><s></s></p></div>
      <div class="big"><svg width="30" height="28" viewBox="0 0 30 28"><rect x="1" y="8" width="27" height="12" fill="#fff" stroke="#aaa"/><rect x="4" y="11" width="13" height="6" fill="#2d8be0"/><path d="M17 1.500h4l2 2 2-2h4M17 26.500h4l2-2 2 2h4M23 3v22" stroke="#777" stroke-width="2.400" fill="none"/></svg><p>Renomear</p></div>
    </div><h6>Organizar</h6></div>
    <div class="grp g3"><div class="gc">
      <div class="big"><svg width="20" height="28" viewBox="0 0 20 28"><path d="M0 2h16v15h3v9l-8 .500L6 28 0 24z" fill="url(#gfold)"/><path d="M0 2l6 6v20l-6-4z" fill="#ffeeb5"/></svg><p>Nova<br>pasta</p></div>
      <ul><li><svg viewBox="0 0 16 16"><rect x=".5" y=".5" width="9" height="7" fill="#d4ecff" stroke="#889"/><rect x="4.500" y="3.500" width="7" height="9" fill="#fff" stroke="#999"/><rect x="8.500" y="6.500" width="7" height="9" fill="#fff" stroke="#999"/><path d="M10 10h4M10 13h4" stroke="#d44"/></svg>Novo item <s></s></li><li><svg viewBox="0 0 16 16"><path d="M4 1h8l3 3v12H4z" fill="#fff"/><path d="M1 4h5M0 7h5M1 10h5" stroke="#3d8fe0"/></svg>Fácil acesso <s></s></li></ul>
    </div><h6>Novo</h6></div>
    <div class="grp g4"><div class="gc">
      <div class="big"><svg width="22" height="28" viewBox="0 0 24 28" preserveAspectRatio="none"><use href="#dicon"/><path d="M5 15l5 6L19 10" fill="none" stroke="#f0641e" stroke-width="3"/></svg><p>Propriedades<br><s></s></p></div>
      <ul><li><svg viewBox="0 0 16 16"><rect width="16" height="16" fill="#8a8a8a"/><path d="M3 1h7l3 3v11H3z" fill="#fff"/></svg>Abrir <s></s></li><li class="gray"><svg viewBox="0 0 16 16"><path d="M2 0h8l4 4v12H2z" fill="#9a9a9a"/><path d="M5 14L15 3" stroke="#555" stroke-width="2.500"/></svg>Editar</li><li><svg viewBox="0 0 16 16"><path d="M0 0h10v14H0z" fill="url(#gfold)"/><circle cx="10.500" cy="10.500" r="5" fill="#ccc" stroke="#666"/><path d="M10 7.500v3l2 2" stroke="#333" fill="none"/><path d="M8 5c-4 2-5 5-3 9" stroke="#3fae3a" stroke-width="2.500" fill="none"/></svg>Histórico</li></ul>
    </div><h6>Abrir</h6></div>
    <div class="grp g5"><div class="gc">
      <ul><li><svg viewBox="0 0 16 16" class="sa"><rect width="16" height="16" fill="#2d9be8"/><use href="#sq4"/></svg>Selecionar tudo</li><li><svg class="sb"><use href="#sq4"/></svg>Limpar seleção</li><li><svg viewBox="0 0 16 16" class="sa"><path d="M8 0h8v8H8zM0 8h8v8H0z" fill="#2d9be8"/><use href="#sq4"/></svg>Inverter seleção</li></ul>
    </div><h6>Selecionar</h6></div>
  </div>
  <div class="addr">
    <svg class="n1" viewBox="0 0 12 12"><path d="M12 6H1M6 1L1 6l5 5" fill="none" stroke="#fff" stroke-width="1.900"/></svg>
    <svg class="n2" viewBox="0 0 12 12"><path d="M0 6h11M6 1l5 5-5 5" fill="none" stroke="#fff" stroke-width="1.900"/></svg>
    <svg class="n3" viewBox="0 0 8 8"><path d="M1 2.500l3 3 3-3" fill="none" stroke="#ccc" stroke-width="1.600"/></svg>
    <svg class="n4" viewBox="0 0 12 12"><path d="M6 12V1M1 6l5-5 5 5" fill="none" stroke="#fff" stroke-width="1.900"/></svg>
    <div class="path"><svg><use href="#folder"/></svg><i>›</i><span>Este Computador</span><i>›</i><span>Downloads</span><i>›</i><span>premium_sample</span><i>›</i><span>Pacote PRÊMIO</span>
      <svg class="pv" viewBox="0 0 10 8"><path d="M1 1.500l4 4 4-4" fill="none" stroke="#aaa" stroke-width="1.800"/></svg><svg class="pr" viewBox="0 0 10 12"><path d="M3 3a4 4 0 1 0 5 1M5 1h3.500v3.500" fill="none" stroke="#ccc" stroke-width="1.400"/></svg></div>
    <div class="find"><span>Pesquisar Pacote PRÊMIO</span><svg viewBox="0 0 12 12"><circle cx="7.500" cy="4.500" r="3.600" fill="none" stroke="#bbb" stroke-width="1.500"/><path d="M5 7l-4.500 4.500" stroke="#bbb" stroke-width="1.800"/></svg></div>
  </div>
  <div class="ebody">
    <nav class="tree">
      <div class="t0"><svg><use href="#star"/></svg>Acesso rápido</div>
      <div><svg><use href="#desk"/></svg>Área de Trabalho<svg class="pn"><use href="#pin"/></svg></div>
      <div><svg><use href="#down"/></svg>Downloads<svg class="pn"><use href="#pin"/></svg></div>
      <div><svg><use href="#doc"/></svg>Documentos<svg class="pn"><use href="#pin"/></svg></div>
      <div><svg><use href="#img"/></svg>Imagens<svg class="pn"><use href="#pin"/></svg></div>
      <div><svg><use href="#hd"/></svg>HD 2TB (D:)</div>
      <div><svg><use href="#folder"/></svg>Hinos</div>
      <div><svg><use href="#folder"/></svg>PROGRAMAS</div>
      <div class="tight"><svg><use href="#folder"/></svg>Windows 7 SP1 X86 X64 A</div>
      <div class="t0 gap"><svg><use href="#cloud"/></svg>OneDrive</div>
      <div class="t0 gap"><svg><use href="#pc"/></svg>Este Computador</div>
      <div><svg><use href="#desk"/></svg>Área de Trabalho</div>
      <div><svg><use href="#doc"/></svg>Documentos</div>
      <div class="sel"><svg><use href="#down"/></svg>Downloads</div>
      <div><svg><use href="#img"/></svg>Imagens</div>
      <div><svg><use href="#note"/></svg>Músicas</div>
      <div><svg><use href="#cube3"/></svg>Objetos 3D</div>
      <div><svg><use href="#vid"/></svg>Vídeos</div>
      <div><svg><use href="#hdw"/></svg>Disco Local (C:)</div>
      <div><svg><use href="#hd"/></svg>HD 2TB (D:)</div>
      <div><svg><use href="#hd"/></svg>LINUX (E:)</div>
      <div class="t0 gap"><svg><use href="#net"/></svg>Rede</div>
    </nav>
    <div class="files">
      <div class="cols"><span>Nome<svg viewBox="0 0 8 5"><path d="M.5 4.500L4 1l3.500 3.500" fill="none" stroke="#aaa"/></svg></span><span>Data de modificação</span><span>Tipo</span><span>Tamanho</span></div>
      <div class="row"><span><svg><use href="#folder"/></svg>Logotipos (Formato vetorial)</span><span>08/01/2020 15:33</span><span>Pasta de arquivos</span><span></span></div>
      <div class="row"><span><svg><use href="#folder"/></svg>Logotipos (Tamanho fixo)</span><span>08/01/2020 15:33</span><span>Pasta de arquivos</span><span></span></div>
      <div class="row"><span><svg><use href="#folder"/></svg>Logotipos (Tamanho livre)</span><span>08/01/2020 15:33</span><span>Pasta de arquivos</span><span></span></div>
      <div class="row on"><span><svg><use href="#chrome"/></svg>DICAS DE USO.pdf</span><span>08/01/2020 10:49</span><span>Chrome HTML Do...</span><span>65 KB</span></div>
    </div>
  </div>
  <div class="status"><span class="x1">4 itens</span><span class="x2">1 item selecionado</span><span class="x3">64,1 KB</span><span class="x4">Estado:<svg viewBox="0 0 18 16"><circle cx="5" cy="4" r="3.500" fill="#c9a274"/><path d="M0 16c0-9 9-9 9 0z" fill="#3f8f55"/><circle cx="13" cy="4" r="3.500" fill="#8a6a4a"/><path d="M8 16c0-9 10-9 10 0z" fill="#4a8fd0"/></svg>Compartilhado</span>
    <div class="views"><i><svg viewBox="0 0 16 16"><path d="M0 0h5v16H0z" fill="#eee"/><path d="M1.500 3h2M1.500 8h2M1.500 13h2" stroke="#338" stroke-width="1.500"/><path d="M7 3h9M7 8h9M7 13h9" stroke="#999" stroke-dasharray="4 1"/></svg></i><svg viewBox="0 0 16 16"><use href="#img"/></svg></div></div>
</section>
</div>

<footer class="taskbars">
  <div class="tk">
    <div class="q"><svg><use href="#win"/></svg></div><div class="q"><svg><use href="#mag"/></svg></div><div class="q"><svg><use href="#cort"/></svg></div><div class="q"><svg><use href="#tv"/></svg></div>
    <div class="r u"><svg><use href="#expl"/></svg></div><div class="r"><svg><use href="#mail"/></svg><b>1</b></div><div class="r"><svg><use href="#osk"/></svg></div><div class="r u"><svg><use href="#vsc"/></svg></div><div class="r"><svg><use href="#cmd"/></svg></div><div class="r u hot"><svg><use href="#chrome"/></svg></div><div class="r"><svg><use href="#and"/></svg></div><div class="r"><svg><use href="#paint"/></svg></div><div class="r"><svg><use href="#np"/></svg></div><div class="r"><svg><use href="#calc"/></svg></div><div class="r"><svg><use href="#ps"/></svg></div><div class="r"><svg><use href="#gicon"/></svg></div><div class="r"><svg><use href="#notion"/></svg></div><div class="r"><svg class="sm"><use href="#gear"/></svg></div><div class="r u"><svg><use href="#clk"/></svg><b class="bell"><svg viewBox="0 0 8 10"><path d="M1 8.500h6L6 7V4a2 2 0 0 0-4 0v3zM3 9.500h2" fill="none" stroke="#fff"/></svg></b></div>
    <div class="time t1">00:49<br>10/06/2020</div>
  </div>
  <div class="tk">
    <div class="q"><svg><use href="#win"/></svg></div><div class="q"><svg><use href="#mag"/></svg></div><div class="q"><svg><use href="#cort"/></svg></div><div class="q"><svg><use href="#tv"/></svg></div>
    <div class="r u"><svg><use href="#expl"/></svg></div><div class="r"><svg><use href="#mail"/></svg><b>1</b></div><div class="r"><svg><use href="#osk"/></svg></div><div class="r u"><svg><use href="#vsc"/></svg></div><div class="r"><svg><use href="#cmd"/></svg></div><div class="r u hot"><svg><use href="#chrome"/></svg></div><div class="r"><svg><use href="#and"/></svg></div><div class="r"><svg><use href="#paint"/></svg></div><div class="r"><svg><use href="#np"/></svg></div><div class="r"><svg><use href="#calc"/></svg></div><div class="r"><svg><use href="#ps"/></svg></div><div class="r"><svg><use href="#gicon"/></svg></div><div class="r"><svg><use href="#notion"/></svg></div><div class="r"><svg class="sm"><use href="#gear"/></svg></div><div class="r u"><svg><use href="#clk"/></svg><b class="bell"><svg viewBox="0 0 8 10"><path d="M1 8.500h6L6 7V4a2 2 0 0 0-4 0v3zM3 9.500h2" fill="none" stroke="#fff"/></svg></b></div>
    <div class="tray"><svg width="12" height="8" viewBox="0 0 12 8"><path d="M.5 7L6 1.500 11.500 7" fill="none" stroke="#fff" stroke-width="1.300"/></svg><svg width="16" height="14" viewBox="0 0 16 14"><path d="M4 2.500h11.500V10H3.500M9 10v3M5 13.300h8M.5.500h3v4h-3zM2 5v6" fill="none" stroke="#fff"/></svg><svg width="17" height="14" viewBox="0 0 17 14"><path d="M.5 5h3L6.500 2v10l-3-3h-3zM9 4.500c1.200 1.500 1.200 3.500 0 5M11.500 2.500c2.300 2.500 2.300 6.500 0 9M14 .500c3 4 3 9 0 13" fill="none" stroke="#fff"/></svg><span>POR</span></div>
    <div class="time t2">00:49<br>10/06/2020</div>
    <div class="ntf"><svg viewBox="0 0 16 16"><path d="M0 0h16v13H9l-4 3v-3H0z" fill="#fff"/><path d="M3 3.500h10M3 6.500h10M3 9.500h6" stroke="#222"/></svg><b>30</b></div>
  </div>
</footer>
</body>
</html>
```

FILE: styles.css
```css
* { box-sizing: border-box; margin: 0; padding: 0; }
html { height: 900px; overflow: hidden; }
body { width: 3040px; height: 900px; overflow: hidden; background: #202020; font-family: "Open Sans", "Noto Sans CJK SC", sans-serif; font-size: 12px; color: #fff; --seg: -0.3px; }
.defs { position: absolute; }
svg { flex: none; display: block; }
i, em { font-style: normal; }
.desktop { display: flex; height: 860px; }
.chrome { width: 1600px; height: 860px; display: flex; flex-direction: column; background: #35363a; }

.tabs { height: 34px; background: #202124; display: flex; padding-left: 8px; }
.tab { width: 60px; height: 34px; display: flex; align-items: center; padding-left: 8px; gap: 8px; position: relative; color: #9aa0a6; letter-spacing: -0.4px; }
.tab.n { width: 59px; }
.tab svg, .lfav { width: 16px; height: 16px; }
.tab span { width: 25px; white-space: nowrap; mask-image: linear-gradient(90deg, #000 55%, rgba(0,0,0,.15) 90%); }
.tab::after { content: ""; position: absolute; right: 0; top: 7px; width: 1px; height: 20px; background: #4a4c50; }
.tab.on::after, .tab.nb::after { display: none; }
.tab.on { background: #35363a; border-radius: 8px 8px 0 0; gap: 15px; }
.tab .tx { width: 9px; height: 9px; }
.tab.dim svg { color: #6b6d70; }
.lfav { background: #4b4bb8; color: #fff; font: bold 12px/16px Roboto, sans-serif; text-align: center; flex: none; }
.plus { width: 13px; height: 13px; margin: 11px 0 0 16px; }
.wbtns { margin-left: auto; display: flex; gap: 36px; padding-right: 18px; }
.wbtns svg { width: 10px; height: 10px; margin-top: 10px; }
.tabs .wbtns svg { margin-top: 9px; }

.toolbar { height: 35px; display: flex; align-items: center; }
.nav { display: flex; width: 140px; padding-left: 14px; gap: 16px; }
.nav svg { width: 16px; height: 16px; }
.omni { width: 1083px; height: 28px; border-radius: 14px; background: #202124; display: flex; align-items: center; padding: 0 10px 0 14px; }
.lock { width: 9px; height: 12px; margin-right: 11px; }
.url { font-size: 14px; letter-spacing: -0.45px; color: #898c90; flex: 1; }
.url em { color: #fff; }
.oz, .os { width: 15px; height: 15px; margin-left: 17px; }
.exts { display: flex; flex: 1; align-items: center; padding: 0 13px 0 14px; justify-content: space-between; }
.exts svg { width: 16px; height: 16px; }
.exts .av { width: 22px; height: 22px; }
.exts .ghx { background: #1b1b1b; }
.exts i { width: 1px; height: 16px; background: #5f6165; }

.marks { height: 34px; display: grid; grid-template-columns: 68px 153px 32px 91px 96px 32px 118px 102px 153px 131px 156px 153px 112px 161px 20px; padding-left: 14px; align-items: center; border-bottom: 1px solid #26272a; letter-spacing: -0.3px; white-space: nowrap; }
.marks a { display: flex; align-items: center; gap: 8px; line-height: 18px; }
.marks svg { width: 16px; height: 16px; }
.marks .more { font-size: 17px; padding-bottom: 3px; }

.apphead { height: 46px; background: #fff; border-bottom: 1px solid #f1f1f1; border-left: 1px solid #eee; display: flex; color: #333; font-size: 14px; font-weight: 300; }
.apphead > div { display: flex; align-items: center; padding-bottom: 2px; }
.back { width: 103px; border-right: 1px solid #eee; padding-left: 25px; gap: 8px; }
.back svg { width: 6px; height: 9px; }
.sup { flex: 1; padding-left: 27px; color: #999; }
.hb { border-left: 1px solid #eee; gap: 9px; }
.hb svg { width: 14px; height: 13px; }
.h1 { width: 152px; padding-left: 21px; }
.h2 { width: 104px; padding-left: 20px; }
.h3 { width: 156px; padding-left: 24px; }
.h4 { width: 132px; padding-left: 24px; background: #39b86f; color: #fff; }

.app { height: 711px; display: flex; color: #222; }
.side { width: 72px; background: #2b2a30; color: #939396; font-size: 14px; letter-spacing: -.3px; display: flex; flex-direction: column; padding-top: 19px; --hole: #2b2a30; }
.side div { height: 71.5px; display: flex; flex-direction: column; align-items: center; gap: 3px; line-height: 19px; }
.side svg { margin-top: 1px; }
.side .fm { height: 80px; }
.side .dc { margin-top: auto; height: 52px; gap: 4px; }
.panel { width: 342px; background: #fff; display: flex; flex-direction: column; justify-content: space-between; --hole: #fff; }
.layers { padding: 29px 22px 0; display: flex; flex-direction: column; gap: 8px; }
.layer { height: 53px; display: flex; align-items: center; padding: 0 11px; box-shadow: 0 5px 6px rgba(0,0,0,.045); font-size: 14px; font-weight: 300; color: #111; }
.layer .li { width: 13px; height: 13px; color: #bcbcbc; margin-right: 22px; }
.layer .cube { width: 15px; height: 15px; margin-right: 20px; }
.layer .mn { width: 13px; height: 12px; }
.layer span { flex: 1; letter-spacing: -.3px; }
.layer.caps span { letter-spacing: .45px; }
.hs { width: 19px; height: 27px; color: #111; margin-left: 3px; }
.adwrap { border-top: 1px solid #eee; height: 289px; padding: 26px 31px; }
.ad { width: 280px; height: 234px; border: 1px solid #d4d4d4; padding: 5px 4px; }
.adin { height: 222px; border: 1px solid #e6e6e6; font-family: "Liberation Sans", Arial, sans-serif; color: #3c3c3c; padding-top: 19px; display: flex; flex-direction: column; align-items: center; }
.adin h3 { font-size: 20.500px; line-height: 24.500px; text-align: center; letter-spacing: .1px; }
.steps { display: grid; grid-template-columns: 84px 100px 72px; width: 270px; margin-top: 17px; font-size: 13px; letter-spacing: -.2px; white-space: nowrap; }
.steps div { display: flex; flex-direction: column; align-items: center; height: 51px; justify-content: space-between; }
.steps svg { fill: none; stroke: #f98a4b; stroke-width: 1.600; }
.cta { width: 137px; height: 34px; margin-top: 15px; margin-left: 1px; border-radius: 4px; background: linear-gradient(#fd8d3e, #fc7c33); color: #fff; font-size: 13.500px; line-height: 35px; text-align: center; letter-spacing: -.9px; }
.wix { align-self: flex-end; margin: 8px 9px 0 0; display: flex; align-items: baseline; line-height: 22px; }
.wix b { font-size: 21px; letter-spacing: -1px; }
.wix span { font-size: 15px; letter-spacing: -.6px; color: #777; }

.canvas { flex: 1; position: relative; background: #f1f1f1; overflow: hidden; --hole: #fff; }
.tips { position: absolute; left: 0; top: 0; width: 328px; }
.th { height: 31px; background: #fff; border-radius: 0 0 6px 0; display: flex; align-items: center; padding: 0 10px 1px 11px; font-size: 13px; letter-spacing: -.4px; }
.th a { margin-left: auto; color: #8884da; font-weight: 300; font-size: 12px; margin-right: 20px; letter-spacing: -.6px; }
.th svg { width: 12px; height: 12px; }
.tb { width: 297px; height: 95px; background: #fff; display: flex; align-items: flex-start; padding: 5px 4px; justify-content: space-between; }
.ar { width: 16px; height: 16px; margin-top: 28px; }
.tc { width: 233px; height: 72px; box-shadow: 0 3px 10px rgba(0,0,0,.12); display: flex; align-items: center; padding-left: 9px; }
.thumb { width: 35px; height: 22px; background: #fafafa; font: bold 4.500px/22px Roboto, sans-serif; text-align: center; color: #333; letter-spacing: -.2px; }
.thumb b { color: #e5262b; }
.thumb.k { background: #000; color: #a08a5a; }
.thumb.k b { color: #e2bf6c; }
.tc i { width: 11px; text-align: center; font-size: 7px; color: #e5262b; }
.tc p { width: 122px; height: 56px; margin: 1px 0 0 12px; font-size: 13px; line-height: 14px; letter-spacing: -.5px; mask-image: linear-gradient(#000 75%, transparent 98%); }
.board { position: absolute; left: 296px; top: 158px; width: 594px; height: 366px; background: #fff; box-shadow: 0 4px 22px rgba(40,50,50,.16); overflow: clip; }
.wm { position: absolute; font: bold 18.500px/20px "Open Sans", sans-serif; letter-spacing: .5px; color: #e9e9e9; transform-origin: 0 100%; transform: translate(5px, -3px) rotate(-20deg); white-space: nowrap; }
.w1 { left: 223px; top: 125px; } .w2 { left: 270px; top: 254px; } .w3 { left: 24px; top: 343px; }
.w4 { left: 469px; top: 36px; } .w5 { left: 516px; top: 165px; } .w6 { left: 563px; top: 293px; }
.w7 { left: 176px; top: -4px; } .w8 { left: -24px; top: 211px; } .w9 { left: -71px; top: 83px; } .w10 { left: 316px; top: 381px; }
.logo { position: absolute; left: 89px; top: 137px; display: flex; color: #1b3c84; gap: 27px; }
.hl { width: 62px; height: 93px; }
.brand { font: 300 56px/56px Lato, sans-serif; -webkit-text-stroke: 1.200px #1b3c84; letter-spacing: 1.700px; margin: -3px 0 0 -4px; white-space: nowrap; }
.tag { font: 300 22.500px/26px Lato, sans-serif; letter-spacing: 1.400px; margin-top: 6px; white-space: nowrap; }
.center { position: absolute; right: 7px; bottom: 7px; width: 122px; height: 26px; background: #fff; box-shadow: 0 3px 10px rgba(0,0,0,.15); display: flex; align-items: center; padding: 0 0 2px 10px; gap: 8px; font-size: 11px; letter-spacing: -.5px; color: #444; white-space: nowrap; }
.center svg { width: 12px; height: 12px; }
.bgbar { position: absolute; left: 429px; top: 535px; width: 328px; height: 54px; background: #dcdcdc; display: flex; align-items: center; padding: 0 10px 0 19px; font-size: 13px; letter-spacing: -.3px; white-space: nowrap; }
.cb { width: 16px; height: 16px; border: 2px solid #7070cc; border-radius: 2px; margin-right: 9px; }
.sw { width: 43px; height: 24px; border: 1px solid #c6c6c6; background: #fff; margin-left: auto; }
.bgbar b { position: absolute; left: 232px; top: 6px; width: 52px; height: 17px; border-radius: 3px; background: #f8e967; color: #4b4698; font: 500 8.500px/16px "Open Sans", sans-serif; letter-spacing: .7px; text-align: center; }
.mk { position: absolute; left: 429px; width: 328px; top: 607px; text-align: center; font-size: 11px; line-height: 18px; letter-spacing: .5px; color: #adadad; white-space: nowrap; }
.pill { position: absolute; top: 628px; height: 45px; border-radius: 23px; background: #2b2a30; box-shadow: 0 4px 12px rgba(30,30,60,.45); display: flex; align-items: center; color: #fff; font-size: 13px; }
.pill i { width: 1px; height: 21px; background: #77777b; }
.p1 { left: 92px; width: 135px; padding: 0 32px; justify-content: space-between; }
.p2 { left: 923px; width: 171px; padding: 0 15px 0 16px; }
.p2 i { margin: 0 16px 0 17px; }
.p2 span { width: 36px; text-align: center; margin: 0 16px 1px 15px; letter-spacing: -.2px; }
.fab { position: absolute; left: 1110px; width: 54px; height: 54px; border-radius: 50%; background: #fff; box-shadow: 0 3px 10px rgba(0,0,0,.14); display: grid; place-items: center; color: #4a49b0; }
.f1 { top: 18px; } .f2 { top: 90px; }
.fab b { position: absolute; right: -5px; top: -4px; width: 17px; height: 18px; border-radius: 9px; background: #f04a38; color: #fff; font: bold 11px/18px Roboto, sans-serif; text-align: center; }
.edge { position: absolute; right: 0; top: 0; width: 12px; height: 711px; background: linear-gradient(90deg, transparent, rgba(60,70,80,.3)); }

.explorer { width: 1440px; height: 860px; display: flex; flex-direction: column; letter-spacing: var(--seg); background: #202020; white-space: nowrap; }
.etitle { height: 23px; background: #2b2b2b; display: flex; align-items: center; padding-left: 2px; color: #a0a0a0; }
.etitle > svg { width: 13px; height: 16px; }
.etitle > i { width: 3px; height: 12px; border: solid #666; border-width: 0 1px; margin: 0 10px 0 7px; }
.etitle > svg + svg { margin-left: 9px; }
.etitle > em { border: 4px solid transparent; border-top-color: #ccc; border-bottom: 0; margin: 4px 0 0 7px; }
.etitle > em + i { margin: 0 6px 0 7px; }
.etitle .wbtns { padding-right: 20px; }
.etitle .wbtns svg { margin: 0; }
.etabs { height: 23px; background: #000; display: flex; align-items: center; line-height: 23px; }
.etabs .a { width: 56px; background: #49695f; text-align: center; }
.etabs .b { width: 56px; background: #202020; text-align: center; height: 23px; border-top: 1px solid #333; line-height: 22px; }
.etabs .c { width: 98px; text-align: center; letter-spacing: -.4px; }
.etabs .d { width: 55px; text-align: center; }
.etabs > svg { margin-left: auto; width: 10px; height: 8px; margin-right: 9px; }
.etabs > b { width: 16px; height: 16px; border-radius: 50%; background: #1a83dd; border: 1px solid #fff; line-height: 14px; text-align: center; font-size: 10px; margin-right: 3px; }
.ribbon { height: 93px; display: flex; border: solid #2f2f2f; border-width: 1px 0; }
.grp { height: 88px; margin-top: 2px; border-right: 1px solid #3a3a3a; display: flex; flex-direction: column; }
.g1 { width: 280px; } .g2 { width: 202px; } .g3 { width: 149px; } .g4 { width: 155px; } .g5 { width: 118px; padding-left: 8px; }
.gc { display: flex; height: 71px; }
.grp h6 { font-size: 12px; font-weight: 400; color: #b0b0b0; text-align: center; line-height: 17px; }
.big { display: flex; flex-direction: column; align-items: center; padding-top: 7px; }
.big p { margin-top: auto; height: 32px; line-height: 13px; text-align: center; }
.gray { color: #9a9a9a; }
.g1 .big:nth-child(1) { width: 88px; padding-top: 11px; } .g1 .big:nth-child(2) { width: 30px; } .g1 .big:nth-child(3) { width: 52px; }
.g2 .big:nth-child(1) { width: 49px; } .g2 .big:nth-child(2) { width: 36px; padding-top: 5px; } .vs { width: 1px; height: 54px; background: #3c3c3c; margin: 8px 8px 0 9px; } .g2 .big:nth-child(4) { width: 28px; } .g2 .big:nth-child(5) { width: 71px; }
.g3 .big { width: 50px; } .g4 .big { width: 80px; }
s { display: inline-block; border: 3px solid transparent; border-top: 4px solid #ddd; border-bottom: 0; vertical-align: 2px; text-decoration: none; }
.grp ul { list-style: none; padding-top: 2px; letter-spacing: -.4px; }
.grp li { display: flex; align-items: center; height: 22px; gap: 3px; }
.grp li svg { width: 16px; height: 16px; }
.sa { color: #bfe0fb; } .sb { color: #eee; }
.addr { height: 35px; background: #191919; display: flex; align-items: center; }
.addr > svg { width: 12px; height: 12px; }
.n1 { margin-left: 13px; } .n2 { margin-left: 18px; } .addr .n3 { width: 8px; margin-left: 13px; } .n4 { margin-left: 10px; }
.path { width: 1108px; height: 22px; margin-left: 8px; border: 1px solid #535353; display: flex; align-items: center; line-height: 18px; }
.path > svg:first-child { width: 13px; height: 16px; margin-left: 4px; }
.path span { padding-bottom: 1px; }
.path i { width: 22px; text-align: center; color: #aaa; font-size: 14px; line-height: 14px; padding-bottom: 2px; }
.pv { width: 10px; height: 8px; margin-left: auto; } .pr { width: 10px; height: 12px; margin: 0 2px 0 7px; }
.find { width: 202px; height: 22px; margin-left: 12px; border: 1px solid #535353; display: flex; align-items: center; justify-content: space-between; padding: 0 7px 0 8px; color: #7d7d7d; }
.find svg { width: 12px; height: 12px; }
.ebody { height: 663px; display: flex; }
.tree { width: 184px; background: #191919; border-right: 1px solid #2b2b2b; padding-top: 15px; }
.tree div { height: 24px; padding-left: 32px; display: flex; align-items: center; gap: 5px; }
.tree svg { width: 16px; height: 16px; }
.tree .tight { letter-spacing: -.65px; }
.tree .t0 { padding-left: 24px; }
.tree .gap { margin-top: 8px; }
.tree .pn { margin-left: auto; width: 10px; height: 10px; margin-right: 4px; }
.tree .sel { height: 22px; margin: 1px 2px 1px 1px; padding-left: 31px; background: #333; }
.files { flex: 1; color: #c9c9c9; }
.cols { display: flex; height: 25px; margin-bottom: 6px; color: #dedede; padding-left: 13px; }
.cols span { border-right: 1px solid #555; line-height: 25px; padding-left: 6px; position: relative; }
.cols svg { position: absolute; width: 8px; height: 5px; left: 127px; top: 0; }
.cols span:nth-child(1) { width: 261px; } .cols span:nth-child(2) { width: 144px; } .cols span:nth-child(3) { width: 120px; } .cols span:nth-child(4) { width: 81px; }
.row { height: 21px; width: 596px; margin-left: 17px; display: grid; grid-template-columns: 263px 144px 136px 1fr; align-items: center; }
.row span:first-child { display: flex; align-items: center; gap: 5px; padding-left: 4px; color: #fff; }
.row span:last-child { text-align: right; padding-right: 3px; }
.row svg { width: 14px; height: 16px; }
.row.on { background: #333; }
.status { height: 23px; background: #333; display: flex; align-items: center; padding-left: 14px; color: #dfdfdf; }
.status span { height: 12px; line-height: 11px; }
.x1 { width: 45px; border-right: 1px solid #eee; } .x2 { width: 115px; padding-left: 10px; } .x3 { width: 49px; border-right: 1px solid #eee; } .x4 { width: 158px; padding-left: 10px; border-right: 1px solid #eee; display: flex; align-items: center; }
.x4 svg { width: 18px; height: 16px; margin: 0 1px; }
.views { margin-left: auto; display: flex; gap: 4px; align-items: center; padding-right: 8px; }
.views i { width: 22px; height: 23px; background: #666; border: 1px solid #888; display: grid; place-items: center; }
.views svg { width: 15px; height: 14px; }

.taskbars { display: flex; height: 40px; background: #1e1e1e; letter-spacing: var(--seg); }
.tk { width: 1600px; display: flex; align-items: center; }
.tk + .tk { width: 1440px; }
.q { width: 48px; display: grid; place-items: center; }
.q svg { width: 17px; height: 17px; }
.q:nth-child(4) { margin-right: 2px; }
.r { width: 49px; height: 40px; display: grid; place-items: center; position: relative; }
.r > svg { width: 24px; height: 24px; }
.r > svg.sm { width: 19px; height: 19px; }
.r.u::after { content: ""; position: absolute; left: 4px; right: 4px; bottom: 0; height: 2px; background: #7fb5a6; }
.r.hot { background: #4a4a4a; } .r.hot::after { left: 0; right: 0; }
.r b { position: absolute; left: 29px; top: 19px; width: 17px; height: 17px; border-radius: 50%; border: 1px solid #888; background: #2a2a2a; font: 12px/15px "Open Sans", sans-serif; text-align: center; display: grid; place-items: center; }
.bell svg { width: 8px; height: 10px; }
.time { width: 64px; text-align: center; line-height: 18px; white-space: nowrap; letter-spacing: -.45px; }
.t1 { margin-left: auto; margin-right: 3px; }
.tray { margin-left: auto; display: flex; align-items: center; gap: 10px; }
.t2 { margin: 0 13px 0 10px; }
.ntf { position: relative; width: 39px; height: 40px; border-right: 1px solid #777; margin-right: 4px; }
.ntf svg { width: 16px; height: 16px; margin: 12px 0 0 2px; }
.ntf b { position: absolute; left: 7px; top: 18px; width: 20px; height: 18px; border-radius: 50%; background: #333; border: 1px solid #999; font: 600 12px/16px "Open Sans", sans-serif; text-align: center; }
```
